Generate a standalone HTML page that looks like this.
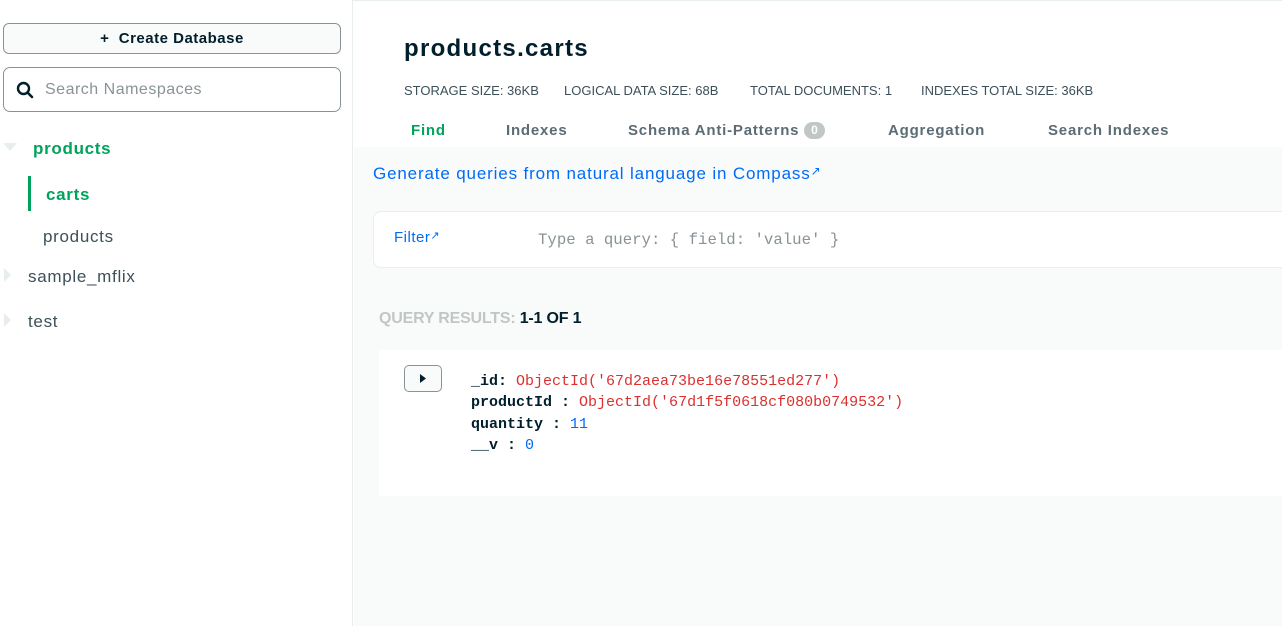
<!DOCTYPE html>
<html><head><style>
*{box-sizing:border-box;margin:0;padding:0}
body{width:1282px;height:626px;overflow:hidden;font-family:"Liberation Sans",sans-serif;background:#fff;position:relative}
.abs{position:absolute;white-space:nowrap}
.side{position:absolute;left:0;top:0;width:353px;height:626px;border-right:1px solid #e8eded;background:#fff}
.topline{position:absolute;left:0;top:0;width:1282px;height:1px;background:#e8eded}
.btn{position:absolute;left:3px;top:23px;width:338px;height:31px;border:1px solid #889397;border-radius:6px;background:#f9fbfa;text-align:center;font-weight:bold;font-size:15px;line-height:29px;color:#001e2b;letter-spacing:0.5px}
.search{position:absolute;left:3px;top:67px;width:338px;height:45px;border:1px solid #889397;border-radius:7px;background:#fff}
.main-gray{position:absolute;left:354px;top:147px;width:928px;height:479px;background:#f9fbfa}
.mono{font-family:"Liberation Mono",monospace}
.tab{font-size:15px;font-weight:bold;color:#5c6c75;letter-spacing:0.8px}
.nav{font-size:17px;letter-spacing:0.7px}
</style></head><body>
<div class="topline"></div>
<div class="side">
 <div class="btn">+&nbsp; Create Database</div>
 <div class="search">
  <svg class="abs" style="left:12px;top:13px" width="18" height="18" viewBox="0 0 18 18"><circle cx="7.5" cy="7.5" r="5.5" fill="none" stroke="#001e2b" stroke-width="2.4"/><path d="M11.5 11.5L16 16" stroke="#001e2b" stroke-width="2.6" stroke-linecap="round"/></svg>
  <div class="abs" style="left:41px;top:13px;font-size:16px;color:#889397;letter-spacing:0.5px">Search Namespaces</div>
 </div>
 <svg class="abs" style="left:3px;top:143px" width="14" height="9"><path d="M0 0H14L7 8Z" fill="#e8eded"/></svg>
 <div class="abs nav" style="left:33px;top:139px;font-weight:bold;color:#00a35c">products</div>
 <div class="abs" style="left:28px;top:176px;width:3px;height:35px;background:#00a35c"></div>
 <div class="abs nav" style="left:46px;top:185px;font-weight:bold;color:#00a35c">carts</div>
 <div class="abs nav" style="left:43px;top:227px;color:#3d4f58">products</div>
 <svg class="abs" style="left:4px;top:268px" width="8" height="14"><path d="M0 0V14L7 7Z" fill="#e8eded"/></svg>
 <div class="abs nav" style="left:28px;top:267px;color:#3d4f58">sample_mflix</div>
 <svg class="abs" style="left:4px;top:313px" width="8" height="14"><path d="M0 0V14L7 7Z" fill="#e8eded"/></svg>
 <div class="abs nav" style="left:28px;top:312px;color:#3d4f58">test</div>
</div>
<div class="abs" style="left:404px;top:35px;font-size:24px;font-weight:bold;color:#001e2b;letter-spacing:1.3px">products.carts</div>
<div class="abs" style="left:404px;top:83px;font-size:13px;color:#3d4f58">STORAGE SIZE: 36KB</div>
<div class="abs" style="left:564px;top:83px;font-size:13px;color:#3d4f58">LOGICAL DATA SIZE: 68B</div>
<div class="abs" style="left:750px;top:83px;font-size:13px;color:#3d4f58">TOTAL DOCUMENTS: 1</div>
<div class="abs" style="left:921px;top:83px;font-size:13px;color:#3d4f58">INDEXES TOTAL SIZE: 36KB</div>
<div class="abs tab" style="left:411px;top:122px;color:#00a35c">Find</div>
<div class="abs tab" style="left:506px;top:122px">Indexes</div>
<div class="abs tab" style="left:628px;top:122px">Schema Anti-Patterns</div>
<div class="abs" style="left:804px;top:122px;width:21px;height:17px;border-radius:9px;background:#c1c7c6;color:#fff;font-size:12px;font-weight:bold;text-align:center;line-height:17px">0</div>
<div class="abs tab" style="left:888px;top:122px">Aggregation</div>
<div class="abs tab" style="left:1048px;top:122px">Search Indexes</div>
<div class="main-gray"></div>
<div class="abs" style="left:373px;top:164px;font-size:17px;color:#016bf8;letter-spacing:0.85px">Generate queries from natural language in Compass<span style="font-size:12px;vertical-align:top">&#x2197;</span></div>
<div class="abs" style="left:373px;top:211px;width:909px;height:57px;background:#fff;border:1px solid #e8eded;border-right:none;border-radius:8px 0 0 8px"></div>
<div class="abs" style="left:394px;top:229px;font-size:15px;color:#016bf8;letter-spacing:0.5px">Filter<span style="font-size:11px;vertical-align:top">&#x2197;</span></div>
<div class="abs mono" style="left:538px;top:231px;font-size:15.7px;color:#889397">Type a query: { field: 'value' }</div>
<div class="abs" style="left:379px;top:310px;font-size:16px;font-weight:bold;letter-spacing:-0.2px;color:#c1c7c6">QUERY RESULTS: <span style="color:#001e2b">1-1 OF 1</span></div>
<div class="abs" style="left:379px;top:350px;width:903px;height:146px;background:#fff"></div>
<div class="abs" style="left:404px;top:365px;width:38px;height:27px;border:1px solid #889397;border-radius:5px;background:#f9fbfa"></div>
<svg class="abs" style="left:420px;top:374px" width="6" height="9"><path d="M0 0V9L6 4.5Z" fill="#001e2b"/></svg>
<div class="abs mono" style="left:471px;top:371px;font-size:15px;line-height:21.3px;color:#001e2b">
<div><b>_id:</b> <span style="color:#db3030">ObjectId('67d2aea73be16e78551ed277')</span></div>
<div><b>productId :</b> <span style="color:#db3030">ObjectId('67d1f5f0618cf080b0749532')</span></div>
<div><b>quantity :</b> <span style="color:#016bf8">11</span></div>
<div><b>__v :</b> <span style="color:#016bf8">0</span></div>
</div>
</body></html>
